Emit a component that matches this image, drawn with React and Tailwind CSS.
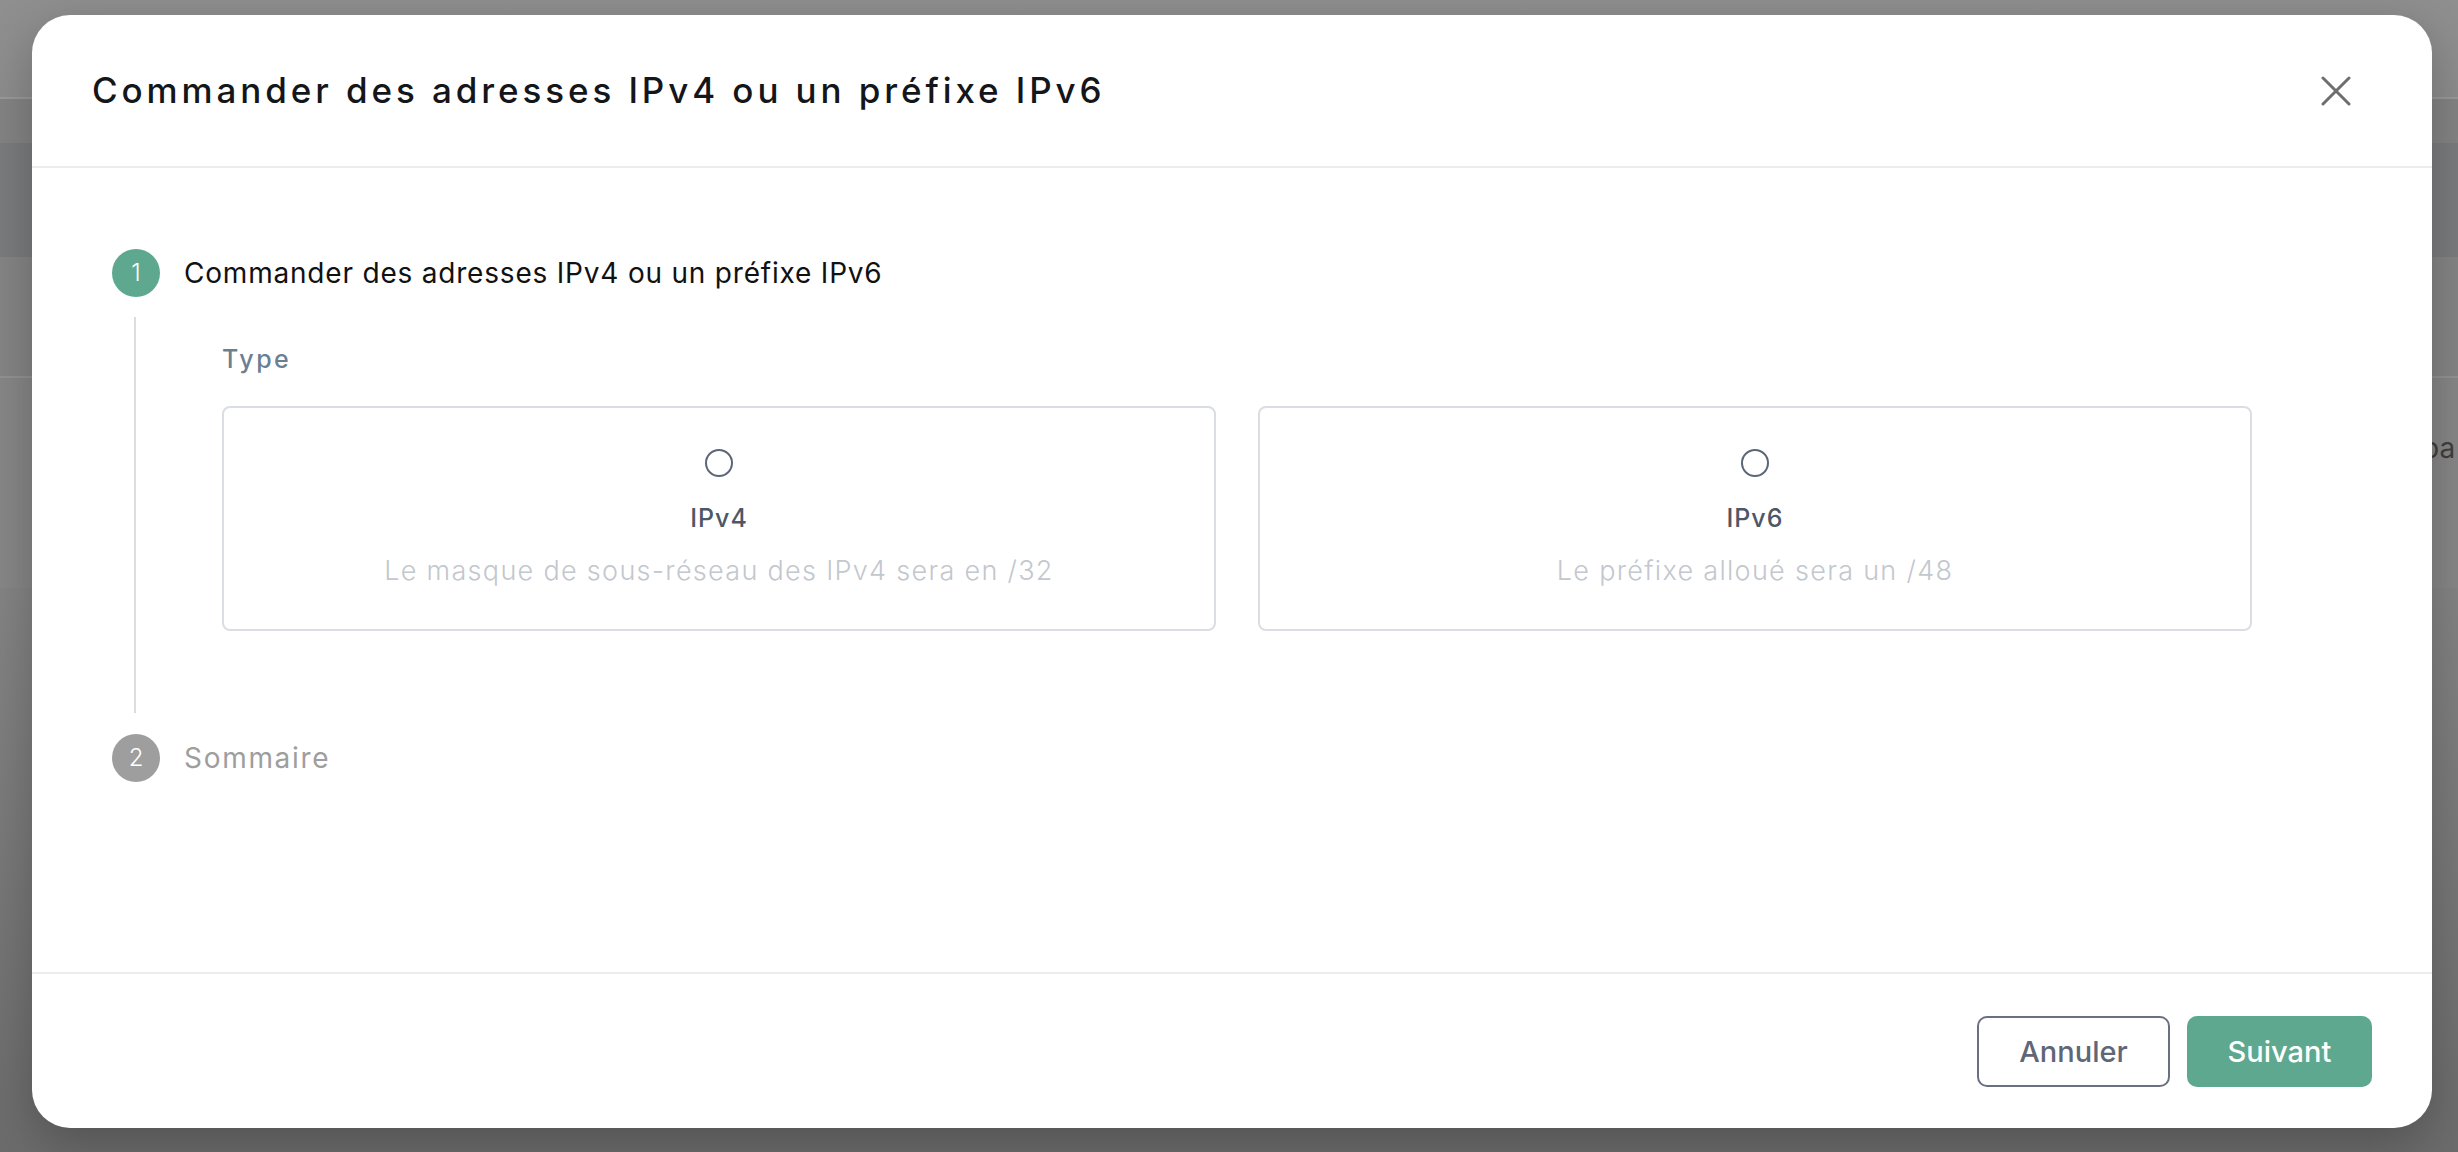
import React, { useState } from 'react';

const CloseIcon = () => (
  <svg width="30" height="30" viewBox="0 0 30 30" fill="none" stroke="#6e6e6e" strokeWidth="3" strokeLinecap="round">
    <path d="M2 2 28 28M28 2 2 28" />
  </svg>
);

const StepDot = ({ n, active }) => (
  <div
    className={`flex h-[48px] w-[48px] shrink-0 items-center justify-center rounded-full text-[24px] font-light leading-none text-white ${
      active ? 'bg-[#5ea890]' : 'bg-[#9e9e9e]'
    }`}
  >
    {n}
  </div>
);

const TypeCard = ({ label, hint, checked, onSelect }) => (
  <button
    onClick={onSelect}
    className="flex h-[225px] flex-col items-center rounded-[8px] border-2 border-[#dadde1] bg-white pt-[41px] text-center"
  >
    <span
      className={`h-[28px] w-[28px] rounded-full border-2 ${checked ? 'border-[#5ea890] border-[8px]' : 'border-[#5b6678]'}`}
    />
    <span className="mt-[23px] text-[25px] font-medium leading-[36px] tracking-[1px] text-[#4d5867]">{label}</span>
    <span className="mt-[15px] text-[27px] font-light leading-[40px] tracking-[1.3px] text-[#c3c7ce]">{hint}</span>
  </button>
);

export default function App() {
  const [type, setType] = useState(null);

  return (
    <div className="relative h-[1152px] w-full overflow-hidden bg-gradient-to-b from-[#8f8f8f] via-[#858585] to-[#6c6c6c] font-[Inter,sans-serif]">
      {/* page behind the overlay */}
      <div className="flex flex-col">
        <div className="h-[99px] border-b-2 border-[#9a9a9a]" />
        <div className="h-[44px] bg-[#848484]" />
        <div className="h-[114px] bg-[#7b7c7e]" />
        <div className="h-[121px] border-b-2 border-[#939393] bg-[#858585]" />
        <div className="flex h-[210px] items-start bg-[#878787] pl-[2422px] pt-[53px] text-[28px] leading-[34px] text-[#3f3f3f]">pa</div>
      </div>

      {/* modal */}
      <div className="absolute inset-0 pl-[32px] pt-[15px]">
        <div className="flex h-[1113px] w-[2400px] flex-col rounded-[38px] bg-white shadow-[0_16px_50px_rgba(0,0,0,0.25)]">
          <div className="flex h-[153px] shrink-0 items-center justify-between border-b-2 border-[#ececec] pl-[60px] pr-[81px]">
            <h1 className="text-[35px] font-medium leading-none tracking-[3.9px] text-[#14161a]">
              Commander des adresses IPv4 ou un préfixe IPv6
            </h1>
            <button className="flex items-center justify-center">
              <CloseIcon />
            </button>
          </div>

          <div className="flex flex-1 flex-col pl-[80px] pt-[81px]">
            <div className="flex items-center gap-[24px]">
              <StepDot n="1" active />
              <span className="text-[28px] leading-none tracking-[0.8px] text-[#111111]">
                Commander des adresses IPv4 ou un préfixe IPv6
              </span>
            </div>
            <div className="flex">
              <div className="ml-[22px] mt-[20px] mb-[21px] w-[2px] bg-[#dddddd]" />
              <div className="flex flex-col pl-[86px] pt-[46px] pb-[103px]">
                <span className="text-[25px] font-medium leading-[32px] tracking-[2.5px] text-[#6c7f92]">Type</span>
                <div className="mt-[31px] grid w-[2030px] grid-cols-2 gap-[42px]">
                  <TypeCard
                    label="IPv4"
                    hint="Le masque de sous-réseau des IPv4 sera en /32"
                    checked={type === 'v4'}
                    onSelect={() => setType('v4')}
                  />
                  <TypeCard
                    label="IPv6"
                    hint="Le préfixe alloué sera un /48"
                    checked={type === 'v6'}
                    onSelect={() => setType('v6')}
                  />
                </div>
              </div>
            </div>
            <div className="flex items-center gap-[24px]">
              <StepDot n="2" />
              <span className="text-[28px] leading-none tracking-[1.7px] text-[#9e9e9e]">Sommaire</span>
            </div>
          </div>

          <div className="flex shrink-0 justify-end gap-[17px] border-t-2 border-[#ececec] pb-[41px] pr-[60px] pt-[42px]">
            <button className="h-[71px] w-[193px] rounded-[10px] border-2 border-[#6b7080] text-[29px] font-medium text-[#5f6678]">
              Annuler
            </button>
            <button className="h-[71px] w-[185px] rounded-[10px] bg-[#5ea890] text-[29px] font-medium text-white">
              Suivant
            </button>
          </div>
        </div>
      </div>
    </div>
  );
}
